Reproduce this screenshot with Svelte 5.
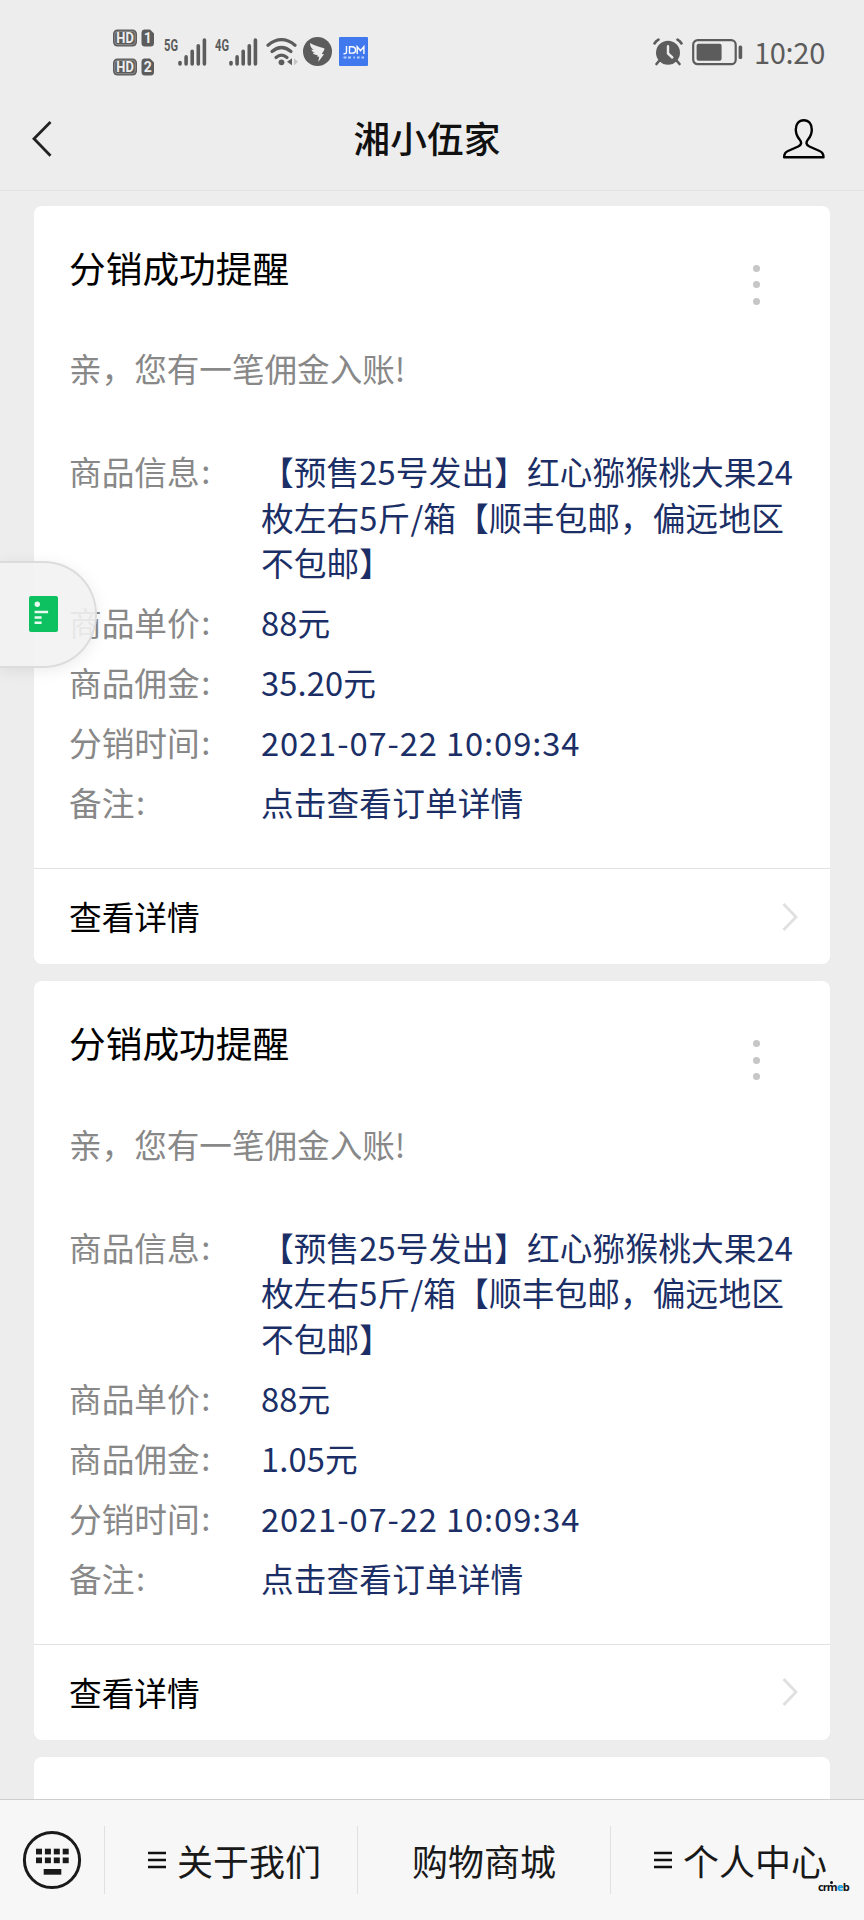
<script>
  const product = '【预售25号发出】红心猕猴桃大果24枚左右5斤/箱【顺丰包邮，偏远地区不包邮】';
  const makeRows = (commission) => [
    { label: '商品信息', value: product },
    { label: '商品单价', value: '88元' },
    { label: '商品佣金', value: commission },
    { label: '分销时间', value: '2021-07-22 10:09:34', wide: true },
    { label: '备注', value: '点击查看订单详情' }
  ];
  const cards = [makeRows('35.20元'), makeRows('1.05元')];
  const menu = [
    { text: '关于我们', sub: true },
    { text: '购物商城', sub: false },
    { text: '个人中心', sub: true }
  ];
  const bars = [0, 1, 2, 3, 4];
</script>

{#snippet signal(label)}
  <svg class="signal" width="43" height="36" viewBox="0 -6 43 36">
    <text x="0" y="12.5" font-size="16" font-weight="700" textLength="14" lengthAdjust="spacingAndGlyphs">{label}</text>
    {#each bars as i}
      <line x1={16 + i * 6.1} x2={16 + i * 6.1} y1={24.5 - i * 5.6} y2="26" stroke="#5c5c5c" stroke-width="3.6" stroke-linecap="round" />
    {/each}
  </svg>
{/snippet}

<div class="phone">
  <header class="status">
    <svg class="hd" width="42" height="48" viewBox="0 0 42 48">
      {#each [1, 2] as n}
        <g transform="translate(0 {(n - 1) * 29})">
          <rect x="1" y="0.5" width="24" height="17" rx="4.5" fill="#5c5c5c" />
          <rect x="2.8" y="2.3" width="20.4" height="13.4" rx="3" fill="none" stroke="#a5a5a5" stroke-width="0.7" />
          <text x="4.3" y="14" font-size="14" font-weight="700" fill="#ededed" textLength="17.5" lengthAdjust="spacingAndGlyphs">HD</text>
          <path d="M32 .5h6l4 4V14a3.5 3.5 0 0 1-3.5 3.5H33a3.5 3.5 0 0 1-3.500-3.500V3.500a3 3 0 0 1 2.500-3z" fill="#5c5c5c" />
          <text x="35.7" y="14.2" font-size="14" font-weight="700" fill="#ededed" text-anchor="middle">{n}</text>
        </g>
      {/each}
    </svg>
    {@render signal('5G')}
    {@render signal('4G')}
    <svg class="wifi" width="32" height="28" viewBox="0 0 32 28">
      <g fill="none" stroke="#5c5c5c" stroke-width="3.2" stroke-linecap="round">
        <path d="M2 7.2Q15.5-3.8 29 7.2" />
        <path d="M6 13.5Q15.5 5.5 25 13.5" />
        <path d="M10 19.5Q15.5 14.8 21 19.5" />
      </g>
      <circle cx="15.5" cy="24.3" r="2.9" fill="#5c5c5c" />
      <path d="M26 20.2v7l-5-3.5z" fill="#5c5c5c" />
      <path d="M28 20.2v7l4-3.5z" fill="#c4c4c4" />
    </svg>
    <svg class="bird" width="29" height="29" viewBox="0 0 29 29">
      <circle cx="14.5" cy="14.5" r="14.5" fill="#5c5c5c" />
      <path d="M7 6c3.500 2.200 8 3.700 14 5.300.9.3.6 1.600-2.200 5.700l2.200.2-5.800 7.800 1-5.200-2.100-.2.5-1.600c-2.600.2-4.300-.8-4.900-2.200l2.300.1c-2-.7-3.300-1.700-3.700-3.300l2.700.5C8.500 11.400 7 9.300 7 6z" fill="#ededed" />
    </svg>
    <svg class="jdm" width="29" height="29" viewBox="0 0 29 29">
      <rect width="29" height="29" rx="1" fill="#4078ee" />
      <g fill="none" stroke="#fff" stroke-width="1.4">
        <path d="M7.5 9v6q0 2-3 1.7M10.5 9.7v6.4H13c4.7 0 4.7-6.4 0-6.4zM18.2 17V9.7l3.3 4 3.4-4V17" />
      </g>
      <path d="M4.5 20.5h3M9 20.5h3M14.5 20.5h1.5M18 20.5h2.6M22.5 20.5H25" stroke="#b9cffa" stroke-width="2" />
    </svg>
    <span class="grow"></span>
    <svg class="alarm" width="30" height="28" viewBox="0 0 30 28">
      <circle cx="15" cy="14.8" r="12" fill="#5c5c5c" />
      <g fill="none" stroke="#5c5c5c" stroke-width="2.6" stroke-linecap="round">
        <path d="M1.5 5.5Q3 3 5.5 1.7M24.5 1.7Q27 3 28.5 5.5M6 23l-2.5 3M24 23l2.5 3" />
      </g>
      <path d="M15 8.2v7.3l4.3 4" fill="none" stroke="#ededed" stroke-width="2.4" stroke-linecap="round" />
    </svg>
    <svg class="battery" width="51" height="27" viewBox="0 0 51 27">
      <rect x="1.2" y="1.2" width="42.5" height="24" rx="4.5" fill="none" stroke="#5c5c5c" stroke-width="2.2" />
      <rect x="4.6" y="4.8" width="25" height="17" rx="2" fill="#5c5c5c" />
      <rect x="46.6" y="6.5" width="3.6" height="13.5" rx="1.5" fill="#5c5c5c" />
    </svg>
    <span class="time">10:20</span>
  </header>

  <nav class="nav">
    <svg width="21" height="38" viewBox="0 0 21 38"><path d="M19.5 2L3 18.8l16.5 17" fill="none" stroke="#222" stroke-width="2.8" /></svg>
    <h1>湘小伍家</h1>
    <svg width="42" height="40" viewBox="0 0 42 40">
      <path d="M20.8 1.2c-5 0-8 3.8-8 9.3 0 4.2 1.3 7 3.6 9.8 2.6 3.2 2.2 5.7-1.2 7.2L5 32C2 33.3 1.100 35 1.100 38.200h39.400c0-3.200-.9-4.900-3.900-6.200l-10.200-4.500c-3.400-1.500-3.800-4-1.200-7.200 2.300-2.800 3.600-5.600 3.600-9.800 0-5.500-3-9.300-8-9.300z" fill="none" stroke="#000" stroke-width="2.4" stroke-linejoin="round" />
    </svg>
  </nav>

  <main>
    {#each cards as rows}
      <article class="card">
        <div class="head">
          <h2>分销成功提醒</h2>
          <div class="dots"><i></i><i></i><i></i></div>
        </div>
        <p class="intro">亲，您有一笔佣金入账!</p>
        <dl>
          {#each rows as row}
            <div class="row">
              <dt>{row.label}<span>:</span></dt>
              <dd class:wide={row.wide}>{row.value}</dd>
            </div>
          {/each}
        </dl>
        <div class="more">
          <span>查看详情</span>
          <svg width="16" height="30" viewBox="0 0 16 30"><path d="M1.5 2L14 15 1.5 28" fill="none" stroke="#e0e0e0" stroke-width="2.8" /></svg>
        </div>
      </article>
    {/each}
    <article class="card"></article>
  </main>

  <footer>
    <div class="keyboard">
      <svg width="60" height="60" viewBox="0 0 60 60">
        <circle cx="30" cy="30" r="27.6" fill="none" stroke="#1a1a1a" stroke-width="3" />
        {#each [0, 1, 2, 3] as c}
          <rect x={14 + c * 8.9} y="18.7" width="6" height="5.7" fill="#1a1a1a" />
          <rect x={14 + c * 8.9} y="27.5" width="6" height="5.7" fill="#1a1a1a" />
        {/each}
        <rect x="21.7" y="39" width="17.6" height="5.7" fill="#1a1a1a" />
      </svg>
    </div>
    {#each menu as item}
      <div class="item" class:sub={item.sub}>
        {#if item.sub}
          <svg width="18" height="18" viewBox="0 0 18 18"><path d="M0 2h18M0 9h18M0 16h18" stroke="#111" stroke-width="2.3" /></svg>
        {/if}
        <span>{item.text}</span>
      </div>
    {/each}
  </footer>

  <div class="float">
    <svg width="29" height="36" viewBox="0 0 29 36">
      <rect width="29" height="36" rx="2" fill="#0dc160" />
      <circle cx="8.3" cy="8.2" r="2.7" fill="#e9fbf0" />
      <path d="M5.6 16h13.5M5.6 21.5h7M5.6 26.7h7" stroke="#e9fbf0" stroke-width="2.5" />
    </svg>
  </div>

  <div class="brand">crm<b>e</b>b<i></i></div>
</div>

<style>
  :global(body) {
    margin: 0;
    background: #ededed;
  }
  .phone {
    position: relative;
    width: 864px;
    height: 1920px;
    overflow: hidden;
    display: flex;
    flex-direction: column;
    background: #ededed;
    font-family: 'Noto Sans CJK SC', sans-serif;
    color: #000;
  }
  svg {
    display: block;
    flex: none;
  }
  h1, h2, p, dl, dd {
    margin: 0;
    font-weight: 400;
  }
  .status {
    box-sizing: border-box;
    height: 90px;
    padding: 29px 39px 0 112px;
    display: flex;
    align-items: flex-start;
    flex: none;
  }
  .status text {
    font-family: Roboto, sans-serif;
  }
  .signal {
    margin: 3px 0 0 10px;
    fill: #5c5c5c;
  }
  .signal + .signal {
    margin-left: 8px;
  }
  .wifi {
    margin: 9px 0 0 8px;
  }
  .bird {
    margin: 8px 0 0 5px;
  }
  .jdm {
    margin: 8px 0 0 7px;
  }
  .grow {
    flex: 1;
  }
  .alarm {
    margin: 9px 9px 0 0;
  }
  .battery {
    margin: 10px 11px 0 0;
  }
  .time {
    width: 71px;
    margin-top: 2px;
    font: 29px/40px 'Noto Sans CJK SC', sans-serif;
    letter-spacing: -0.3px;
    color: #5c5c5c;
    white-space: nowrap;
  }
  .nav {
    box-sizing: border-box;
    height: 101px;
    flex: none;
    padding: 0 39px 2px 31px;
    border-bottom: 1px solid #e3e3e3;
    display: flex;
    justify-content: space-between;
    align-items: center;
  }
  h1 {
    font-size: 36.7px;
    line-height: 50px;
    font-weight: 500;
    color: #111;
    padding: 0 0 4px 19px;
  }
  main {
    flex: 1;
    min-height: 0;
    overflow: hidden;
    padding: 14.5px 34px 0 34px;
  }
  .card {
    box-sizing: border-box;
    height: 758.5px;
    margin-bottom: 17.3px;
    background: #fff;
    border-radius: 8px;
    display: flex;
    flex-direction: column;
  }
  .head {
    display: flex;
    justify-content: space-between;
    padding: 34px 70.5px 0 35px;
  }
  h2 {
    font-size: 36.7px;
    line-height: 54px;
  }
  .dots {
    display: flex;
    flex-direction: column;
    gap: 9.5px;
    padding-top: 25px;
  }
  .dots i {
    width: 7px;
    height: 7px;
    border-radius: 50%;
    background: #c6c6c6;
  }
  .intro {
    padding: 40.3px 35px 0;
    font-size: 32.6px;
    line-height: 46px;
    color: #888;
  }
  dl {
    margin: 57px 0 0 35px;
    flex: 1;
    font-size: 32.7px;
    line-height: 45.8px;
  }
  .row {
    display: flex;
    margin-bottom: 14.2px;
  }
  dt {
    width: 192px;
    flex: none;
    color: #888;
  }
  dt span {
    position: relative;
    left: 1.5px;
    top: -1px;
  }
  dd {
    width: 540px;
    color: #1b2f66;
    letter-spacing: 0.1px;
  }
  .wide {
    letter-spacing: 0.9px;
  }
  .more {
    box-sizing: border-box;
    height: 96px;
    border-top: 1px solid #e2e2e2;
    padding: 0 32px 0 35px;
    display: flex;
    justify-content: space-between;
    align-items: center;
    font-size: 32.7px;
  }
  .more span {
    padding-bottom: 2px;
  }
  footer {
    box-sizing: border-box;
    height: 121px;
    flex: none;
    background: #f7f7f7;
    border-top: 1px solid #cecece;
    display: flex;
    align-items: center;
  }
  .keyboard {
    width: 104px;
    display: flex;
    justify-content: center;
  }
  .item {
    box-sizing: border-box;
    width: 253px;
    height: 68px;
    border-left: 1px solid #e0e0e0;
    display: flex;
    justify-content: center;
    align-items: center;
    gap: 11px;
    font-size: 36px;
    line-height: 36px;
    color: #191919;
    white-space: nowrap;
  }
  .item span {
    padding-bottom: 1px;
  }
  .item.sub {
    padding-left: 7px;
  }
  .float {
    position: absolute;
    left: 0;
    top: 561px;
    box-sizing: border-box;
    width: 97px;
    height: 107px;
    border: 2px solid #dcdcdc;
    border-left: 0;
    border-radius: 0 53px 53px 0;
    background: rgba(242, 242, 242, 0.9);
    box-shadow: 0 3px 16px rgba(0, 0, 0, 0.08);
    padding: 33px 0 0 29px;
  }
  .brand {
    position: absolute;
    left: 818px;
    top: 1882px;
    font: 700 11px/10px 'Open Sans', sans-serif;
    letter-spacing: -0.9px;
    color: #111;
  }
  .brand b {
    color: #1a9fe0;
  }
  .brand i {
    position: absolute;
    left: 12px;
    top: -1px;
    width: 3px;
    height: 3px;
    border-radius: 50%;
    background: #111;
  }
</style>
